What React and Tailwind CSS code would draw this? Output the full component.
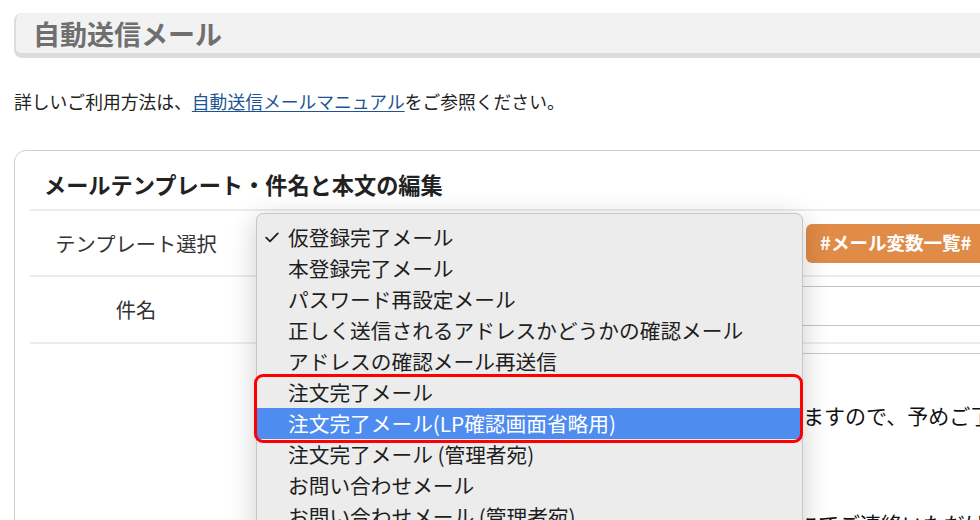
import React from 'react';

const templates = [
  '仮登録完了メール',
  '本登録完了メール',
  'パスワード再設定メール',
  '正しく送信されるアドレスかどうかの確認メール',
  'アドレスの確認メール再送信',
  '注文完了メール',
  '注文完了メール(LP確認画面省略用)',
  '注文完了メール (管理者宛)',
  'お問い合わせメール',
  'お問い合わせメール (管理者宛)',
];

const CheckMark = () => (
  <svg width="14" height="11" viewBox="0 0 14 11" fill="none">
    <path d="M1.2 5.6 L5 9.4 L12.8 1.4" stroke="#1e1e1e" strokeWidth="1.8" strokeLinecap="round" strokeLinejoin="round" />
  </svg>
);

const TemplateMenu = ({ selected, highlighted }) => (
  <div className="absolute left-[256px] top-[213px] w-[547px] h-[340px] z-10 bg-[#ececec] border border-[#c6c6c6] rounded-[7px] shadow-[0_6px_28px_rgba(0,0,0,0.2)] pt-[8px] overflow-hidden">
    {templates.map((name, i) => (
      <div
        key={name}
        className={`relative h-[31px] flex items-center pl-[31px] text-[20.7px] leading-[31px] whitespace-nowrap ${
          i === highlighted ? 'bg-[#4f8cf0] text-white' : 'text-[#1e1e1e]'
        }`}
      >
        {i === selected && (
          <span className="absolute left-[8px] top-[10px]">
            <CheckMark />
          </span>
        )}
        {name}
      </div>
    ))}
  </div>
);

export default function App() {
  return (
    <div className="relative w-[980px] h-[520px] overflow-hidden bg-white font-['Noto_Sans_CJK_JP',sans-serif] text-[#222]">
      {/* 見出し */}
      <div className="ml-[14px] mt-[13px] w-[1000px] h-[45px] bg-[#f2f2f2] border-l-2 border-b-[5px] border-[#dcdcdc] rounded-l-[8px] flex items-center pl-[17px]">
        <h1 className="text-[27px] font-bold text-[#6f6f6f] leading-none">自動送信メール</h1>
      </div>

      <p className="mt-[30px] pl-[14px] text-[17.8px] leading-[27px] text-[#222]">
        詳しいご利用方法は、
        <a href="#" className="text-[#1f5494] underline underline-offset-2 decoration-1">自動送信メールマニュアル</a>
        をご参照ください。
      </p>

      {/* 編集カード */}
      <div className="ml-[14px] mt-[35px] w-[1000px] h-[400px] border border-[#cfcfcf] rounded-[12px] pt-[17px]">
        <h2 className="pl-[29px] text-[22.2px] leading-[33px] font-bold text-[#222]">
          メールテンプレート・件名と本文の編集
        </h2>

        <div className="ml-[15px] mt-[8px]">
          {/* テンプレート選択 */}
          <div className="flex items-center h-[66px] border-t-2 border-[#ececec]">
            <div className="w-[212px] shrink-0 text-center text-[20.3px] text-[#333]">テンプレート選択</div>
            <div className="flex items-center pl-[14px]">
              <div className="w-[540px] shrink-0 h-[39px] border border-[#c4c4c4] rounded-[5px]"></div>
              <button className="ml-[10px] shrink-0 h-[39px] px-[14px] rounded-[6px] bg-[#e08b47] text-white font-bold text-[18.5px] whitespace-nowrap">
                #メール変数一覧#
              </button>
            </div>
          </div>

          {/* 件名 */}
          <div className="flex h-[67px] border-t-2 border-[#ececec]">
            <div className="w-[212px] shrink-0 self-center text-center text-[20.3px] text-[#333]">件名</div>
            <div className="flex-1 pl-[14px] pt-[9px]">
              <div className="h-[40px] border-y border-[#c4c4c4]"></div>
            </div>
          </div>

          {/* 本文 */}
          <div className="flex border-t-2 border-[#ececec]">
            <div className="w-[212px] shrink-0"></div>
            <div className="flex-1 min-w-0 pl-[14px]">
              <div className="mt-[9px] border-t border-[#c8c8c8]">
                <p className="mt-[46px] pl-[169px] text-[21px] leading-[31px] text-[#111] whitespace-nowrap">
                  ご注文内容の確認後、商品を発送いたしますので、予めご了承ください。
                </p>
                <p className="mt-[77px] pl-[331px] text-[21px] leading-[31px] text-[#111] whitespace-nowrap">
                  お問い合わせはメールにてご連絡いただけますようお願いいたします。
                </p>
              </div>
            </div>
          </div>
        </div>
      </div>

      <TemplateMenu selected={0} highlighted={6} />

      {/* 強調枠 */}
      <div className="absolute left-[254px] top-[374px] w-[549px] h-[69px] z-20 border-[3px] border-[#ff0000] rounded-[9px]"></div>
    </div>
  );
}
